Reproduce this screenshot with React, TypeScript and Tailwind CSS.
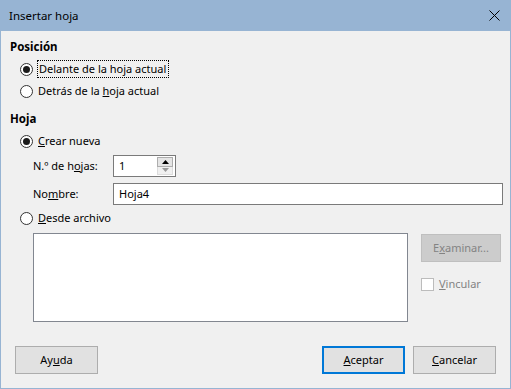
import React from 'react';

const font = { fontFamily: "'Segoe UI', 'Noto Sans', 'Liberation Sans', sans-serif" };

function Radio({ checked }: { checked?: boolean }) {
  return (
    <span className="flex h-[13px] w-[13px] shrink-0 items-center justify-center rounded-full border border-[#333] bg-white">
      {checked && <span className="h-[7px] w-[7px] rounded-full bg-[#1a1a1a]" />}
    </span>
  );
}

function Btn({ children, primary }: { children: React.ReactNode; primary?: boolean }) {
  return (
    <div
      className={
        'flex h-[28px] w-[83px] items-center justify-center bg-[#e1e1e1] ' +
        (primary ? 'border-2 border-[#0078d7]' : 'border border-[#adadad]')
      }
    >
      {children}
    </div>
  );
}

export default function App() {
  return (
    <div className="flex h-[389px] w-[511px] flex-col bg-[#97b4d3] px-px pb-px text-[11px] text-black" style={font}>
      {/* title bar */}
      <div className="flex h-[31px] shrink-0 items-center justify-between pl-[8px] pr-[10px]">
        <span className="text-[11.5px]">Insertar hoja</span>
        <svg width="11" height="11" viewBox="0 0 11 11">
          <path d="M0.5 0.5 L10.5 10.5 M10.5 0.5 L0.5 10.5" stroke="#000" strokeWidth="1" />
        </svg>
      </div>

      <div className="flex flex-1 flex-col bg-[#f0f0f0] pt-[8px]">
        <div className="flex h-[16px] items-center pl-[9px] text-[11.5px] font-bold">Posición</div>

        <div className="mt-[5px] flex h-[18px] items-center pl-[19px]">
          <Radio checked />
          <span className="ml-[4px] flex h-[18px] items-center border border-dotted border-black pl-px pr-[2px]">
            Delante de la hoja actual
          </span>
        </div>
        <div className="mt-[4px] flex h-[18px] items-center pl-[19px]">
          <Radio />
          <span className="ml-[5px]">
            Detrás de la <u>h</u>oja actual
          </span>
        </div>

        <div className="mt-[11px] flex h-[16px] items-center pl-[9px] text-[11.5px] font-bold">Hoja</div>

        <div className="mt-[5px] flex h-[18px] items-center pl-[19px]">
          <Radio checked />
          <span className="ml-[5px]">
            <u>C</u>rear nueva
          </span>
        </div>

        <div className="mt-[5px] flex h-[22px] items-center pl-[32px]">
          <span className="w-[80px]">
            N.º de h<u>o</u>jas:
          </span>
          <div className="flex h-[22px] w-[63px] items-center border border-[#7a7a7a] bg-white pl-[5px] pr-[2px]">
            <span className="flex-1">1</span>
            <div className="flex h-[18px] w-[16px] flex-col">
              <div className="flex flex-1 items-center justify-center border border-[#adadad] bg-[#e5e5e5]">
                <svg width="7" height="4" viewBox="0 0 7 4">
                  <path d="M3.5 0 L7 4 L0 4 Z" fill="#000" />
                </svg>
              </div>
              <div className="flex flex-1 items-center justify-center border border-t-0 border-[#dcdcdc] bg-[#f0f0f0]">
                <svg width="7" height="4" viewBox="0 0 7 4">
                  <path d="M0 0 L7 0 L3.5 4 Z" fill="#9a9a9a" />
                </svg>
              </div>
            </div>
          </div>
        </div>

        <div className="mt-[6px] flex h-[22px] items-center pl-[32px] pr-[7px]">
          <span className="w-[80px]">
            No<u>m</u>bre:
          </span>
          <div className="flex h-[22px] flex-1 items-center border border-[#7a7a7a] bg-white pl-[5px]">Hoja4</div>
        </div>

        <div className="mt-[4px] flex h-[18px] items-center pl-[19px]">
          <Radio />
          <span className="ml-[5px]">
            <u>D</u>esde archivo
          </span>
        </div>

        <div className="mt-[6px] flex pl-[32px]">
          <div className="h-[89px] w-[375px] border border-[#828790] bg-white" />
          <div className="ml-[13px] flex flex-col">
            <div className="mt-px flex h-[28px] w-[80px] items-center justify-center border border-[#bfbfbf] bg-[#cccccc] text-[#838383]">
              <span>
                E<u>x</u>aminar...
              </span>
            </div>
            <div className="mt-[15px] flex h-[14px] items-center">
              <span className="h-[13px] w-[13px] border border-[#bcbcbc] bg-white" />
              <span className="ml-[5px] text-[#838383]">
                <u>V</u>incular
              </span>
            </div>
          </div>
        </div>

        <div className="mt-[24px] flex items-center pl-[14px] pr-[14px]">
          <Btn>
            <span>
              Ay<u>u</u>da
            </span>
          </Btn>
          <div className="flex-1" />
          <Btn primary>
            <span>
              <u>A</u>ceptar
            </span>
          </Btn>
          <div className="ml-[8px]">
            <Btn>
              <span>
                <u>C</u>ancelar
              </span>
            </Btn>
          </div>
        </div>
      </div>
    </div>
  );
}
